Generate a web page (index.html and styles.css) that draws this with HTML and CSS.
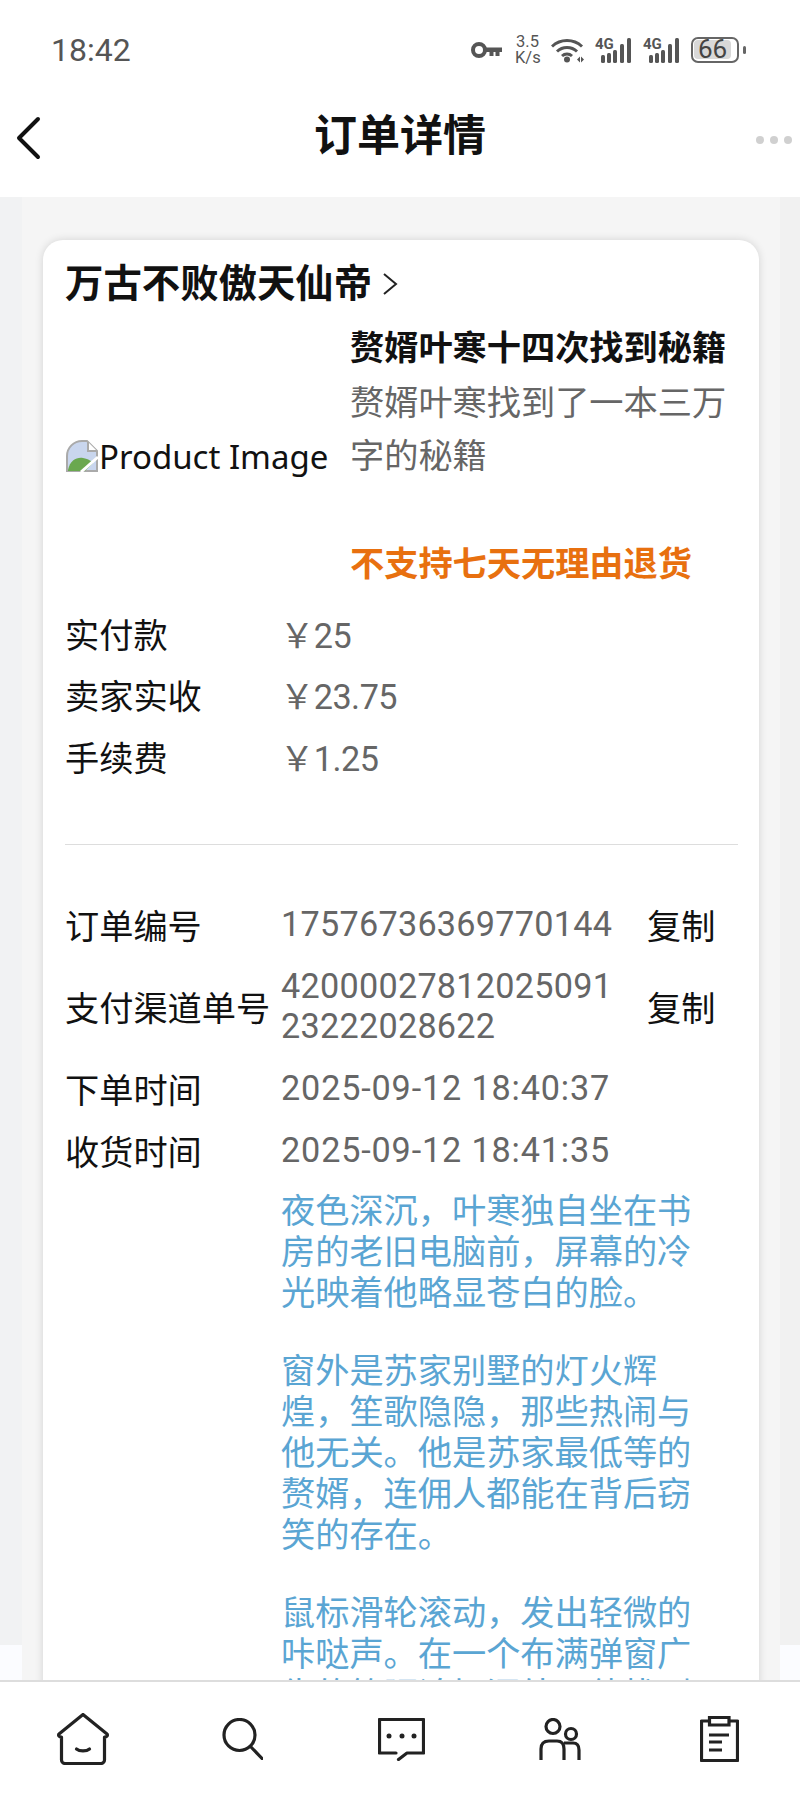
FILE: index.html
```html
<!DOCTYPE html>
<html lang="zh-CN">
<head>
  <meta charset="UTF-8">
  <meta name="viewport" content="width=device-width, initial-scale=1">
  <title>订单详情</title>
  <link rel="stylesheet" href="styles.css">
</head>
<body>
  <div class="statusbar">
    <span class="time">18:42</span>
    <div class="status-icons">
      <svg class="ic-key" width="31" height="18" viewBox="0 0 31 18"><circle cx="8" cy="9" r="6" fill="none" stroke="#555" stroke-width="4"/><path d="M14 6.500h17v4.500h-2.500v4h-4v-4h-2v4h-4v-4h-4.500z" fill="#555"/></svg>
      <span class="speed">3.5<br>K/s</span>
      <svg width="33" height="26" viewBox="0 0 33 26"><g fill="none" stroke="#555" stroke-width="3"><path d="M1 9.500a22 22 0 0 1 30 0"/><path d="M6 14.500a14.500 14.500 0 0 1 20 0"/><path d="M11 19a7.500 7.500 0 0 1 10 0"/></g><circle cx="16" cy="22.500" r="3" fill="#555"/><path d="M26 22.500l3-3v6zM30 19.500l3 3-3 3z" fill="#555"/></svg>
      <div class="signal"><span class="net">4G</span><svg width="32" height="25" viewBox="0 0 32 25"><g fill="#555"><rect x="1" y="17" width="4" height="8" rx="1.500"/><rect x="7" y="15" width="4" height="10" rx="1.500"/><rect x="13" y="12" width="4" height="13" rx="1.500"/><rect x="20" y="6" width="4" height="19" rx="1.500"/><rect x="27" y="0" width="4" height="25" rx="1.500"/></g></svg></div>
      <div class="signal"><span class="net">4G</span><svg width="32" height="25" viewBox="0 0 32 25"><g fill="#555"><rect x="1" y="17" width="4" height="8" rx="1.500"/><rect x="7" y="15" width="4" height="10" rx="1.500"/><rect x="13" y="12" width="4" height="13" rx="1.500"/><rect x="20" y="6" width="4" height="19" rx="1.500"/><rect x="27" y="0" width="4" height="25" rx="1.500"/></g></svg></div>
      <div class="battery"><div class="battery-body"><div class="battery-fill">66</div></div><div class="battery-cap"></div></div>
    </div>
  </div>

  <div class="navbar">
    <svg class="back" width="28" height="44" viewBox="0 0 28 44"><path d="M24 3L5 22l19 19" fill="none" stroke="#111" stroke-width="4" stroke-linecap="round" stroke-linejoin="round"/></svg>
    <h1>订单详情</h1>
    <div class="more"><i></i><i></i><i></i></div>
  </div>

  <div class="page">
    <div class="card">
      <div class="shop">万古不败傲天仙帝<svg width="20" height="26" viewBox="0 0 20 26"><path d="M4 3l12 10L4 23" fill="none" stroke="#222" stroke-width="2"/></svg></div>

      <div class="product">
        <div class="pic">
          <svg width="34" height="34" viewBox="0 0 34 34"><path d="M17 2A15 15 0 0 0 2 17v15h30V12L22 2z" fill="#c9d6ee" stroke="#aaa" stroke-width="2"/><path d="M23 3v9h9" fill="#fff" stroke="#aaa" stroke-width="2"/><path d="M3 31c2-10 9-13 15-12 6 1 8 3 10 5L20 32H3z" fill="#6aa84f"/><path d="M16 33L33 18" stroke="#fff" stroke-width="3"/></svg>
          <span>Product Image</span>
        </div>
        <div class="info">
          <div class="name">赘婿叶寒十四次找到秘籍</div>
          <div class="desc">赘婿叶寒找到了一本三万字的秘籍</div>
          <div class="warn">不支持七天无理由退货</div>
        </div>
      </div>

      <div class="money">
        <div class="money-row"><span class="label">实付款</span><span class="value">￥25</span></div>
        <div class="money-row"><span class="label">卖家实收</span><span class="value">￥23.75</span></div>
        <div class="money-row"><span class="label">手续费</span><span class="value">￥1.25</span></div>
      </div>

      <div class="line"></div>

      <div class="order">
        <div class="order-row first"><span class="label">订单编号</span><span class="value">17576736369770144</span><span class="copy">复制</span></div>
        <div class="order-row pay"><span class="label">支付渠道单号</span><span class="value">4200002781202509123222028622</span><span class="copy">复制</span></div>
        <div class="order-row"><span class="label">下单时间</span><span class="value date">2025-09-12 18:40:37</span></div>
        <div class="order-row"><span class="label">收货时间</span><span class="value date">2025-09-12 18:41:35</span></div>
      </div>

      <div class="content">
        <p>夜色深沉，叶寒独自坐在书房的老旧电脑前，屏幕的冷光映着他略显苍白的脸。</p>
        <p>窗外是苏家别墅的灯火辉煌，笙歌隐隐，那些热闹与他无关。他是苏家最低等的赘婿，连佣人都能在背后窃笑的存在。</p>
        <p>鼠标滑轮滚动，发出轻微的咔哒声。在一个布满弹窗广告的简陋论坛深处，他找到</p>
      </div>
    </div>
  </div>

  <div class="tabbar">
    <svg width="52" height="52" viewBox="0 0 52 52"><path d="M26 1.500L2 21c-1 1.500 0 3 2.500 3v23a3.500 3.500 0 0 0 3.500 3.500h36a3.500 3.500 0 0 0 3.500-3.500V24c2.500 0 3.500-1.500 2.500-3z" fill="none" stroke="#222" stroke-width="3.200" stroke-linejoin="round"/><path d="M19.500 36c3 2.500 10 2.500 13 0" fill="none" stroke="#222" stroke-width="3.200" stroke-linecap="round"/></svg>
    <svg width="41" height="42" viewBox="0 0 41 42"><circle cx="17.500" cy="17" r="15.500" fill="none" stroke="#222" stroke-width="3.200"/><path d="M29 29l11 11.500" stroke="#222" stroke-width="3.200" stroke-linecap="round"/></svg>
    <svg width="47" height="43" viewBox="0 0 47 43"><path d="M18 35H1.500V1.500h44V35H29l-8.500 6.500" fill="none" stroke="#222" stroke-width="3.200" stroke-linejoin="round" stroke-linecap="round"/><circle cx="11" cy="18" r="2.500" fill="#222"/><circle cx="24" cy="18" r="2.500" fill="#222"/><circle cx="36" cy="18" r="2.500" fill="#222"/></svg>
    <svg width="42" height="43" viewBox="0 0 42 43"><circle cx="14" cy="8.500" r="7" fill="none" stroke="#222" stroke-width="3.200"/><circle cx="32" cy="16" r="5.500" fill="none" stroke="#222" stroke-width="3.200"/><path d="M2 42V31q0-8 8-8h8q7 0 7 8v11" fill="none" stroke="#222" stroke-width="3.200"/><path d="M25 25h9q6 0 6 7v10" fill="none" stroke="#222" stroke-width="3.200"/></svg>
    <svg width="39" height="46" viewBox="0 0 39 46"><path d="M9 5H1.500v39.500h36V5H29" fill="none" stroke="#222" stroke-width="3.200" stroke-linejoin="round"/><path d="M9.500 1.500h19.500V9H9.500z" fill="none" stroke="#222" stroke-width="3.200"/><path d="M9 19h20M9 26h13M9 34h13" stroke="#222" stroke-width="3.200"/></svg>
  </div>
</body>
</html>
```

FILE: styles.css
```css
html, body { margin: 0; padding: 0; height: 1806px; overflow: hidden; }
body {
  display: flex; flex-direction: column;
  background: #fff; color: #111;
  font-family: Roboto, "Noto Sans CJK SC", sans-serif;
  font-size: 34.2px;
}

/* Status bar */
.statusbar {
  height: 100px; flex: none; box-sizing: border-box;
  display: flex; justify-content: space-between; align-items: center;
  padding: 0 54px 0 51px;
}
.time { font-size: 32px; color: #555; }
.status-icons { display: flex; align-items: center; gap: 11px; color: #555; }
.speed { font-size: 16.5px; line-height: 16px; text-align: center; width: 25px; white-space: nowrap; }
.signal { position: relative; width: 37px; height: 25px; display: flex; justify-content: flex-end; }
.net { position: absolute; left: 0; top: -1px; font-size: 15px; line-height: 14px; font-weight: 700; }
.ic-key { margin-right: 2px; }
.battery { display: flex; align-items: center; gap: 4px; }
.battery-body { width: 48px; height: 26px; box-sizing: border-box; border: 2.5px solid #666; border-radius: 7px; padding: 1px; }
.battery-fill { width: 37px; height: 19px; background: #d8d8d8; border-radius: 4px; font-size: 26px; line-height: 19px; text-align: center; color: #444; }
.battery-cap { width: 3px; height: 8px; background: #666; border-radius: 2px; }

/* Nav */
.navbar {
  height: 97px; flex: none; position: relative;
  display: flex; justify-content: center; align-items: center;
}
.navbar h1 { margin: -26px 0 0; font-size: 43px; font-weight: 700; line-height: 60px; }
.back { position: absolute; left: 14px; top: 16px; }
.more { position: absolute; right: 8px; top: 36px; display: flex; gap: 6px; }
.more i { width: 8px; height: 8px; border-radius: 50%; background: #d0d0d0; }

/* Page */
.page {
  flex: 1; min-height: 0; overflow: hidden; box-sizing: border-box;
  padding: 43px 41px 0 43px;
  background:
    linear-gradient(#fbfcff, #fbfcff) left bottom / 22px 35px no-repeat,
    linear-gradient(#fbfcff, #fbfcff) right bottom / 20px 35px no-repeat,
    linear-gradient(90deg, #f1f2f3 0, #f1f2f3 22px, #f5f5f5 22px, #f5f5f5 780px, #f1f1f1 780px);
}
.card {
  background: #fff; border-radius: 20px; padding: 17px 21px 0 22px;
  box-shadow: 0 0 8px rgba(0,0,0,.14);
}
.shop { font-size: 38.4px; font-weight: 700; line-height: 54px; display: flex; align-items: center; gap: 8px; }

.product { display: flex; align-items: center; margin-top: 11px; }
.pic { width: 262px; flex: none; display: flex; align-items: center; }
.pic svg { flex: none; }
.pic span { white-space: nowrap; font-family: "Noto Sans", sans-serif; font-size: 33px; }
.info { flex: 1; min-width: 0; padding-left: 23px; }
.name { font-weight: 700; line-height: 52px; white-space: nowrap; margin-bottom: 3px; }
.desc { color: #666; line-height: 53px; width: 380px; }
.warn { color: #e8700f; font-weight: 700; line-height: 52px; margin-top: 55px; }

.money { margin-top: 12px; }
.money-row { display: flex; height: 61.5px; align-items: center; }
.money-row .label { width: 215px; }
.money-row .value { letter-spacing: -.5px; }
.value { color: #666; }
.line { height: 1px; background: #ddd; margin-top: 57px; }

.order { margin-top: 48px; }
.order-row { display: flex; align-items: center; min-height: 62px; }
.order-row .label { width: 216px; flex: none; white-space: nowrap; }
.order-row .value { width: 340px; flex: none; word-break: break-all; line-height: 40px; letter-spacing: .27px; }
.order-row .value.date { letter-spacing: .85px; white-space: nowrap; }
.order-row .copy { margin-left: 26px; }
.order-row.pay { min-height: 102px; }

.content { margin: 10px 46px 0 216px; color: #5aa5d3; line-height: 41px; }
.content p { margin: 0 0 37px; }

/* Tab bar */
.tabbar {
  height: 126px; flex: none; box-sizing: border-box;
  border-top: 2px solid #ddd; background: #fff;
  display: grid; grid-template-columns: repeat(5, 159px); justify-items: center; align-items: center;
  padding: 0 0 10px 3.5px;
}
```
